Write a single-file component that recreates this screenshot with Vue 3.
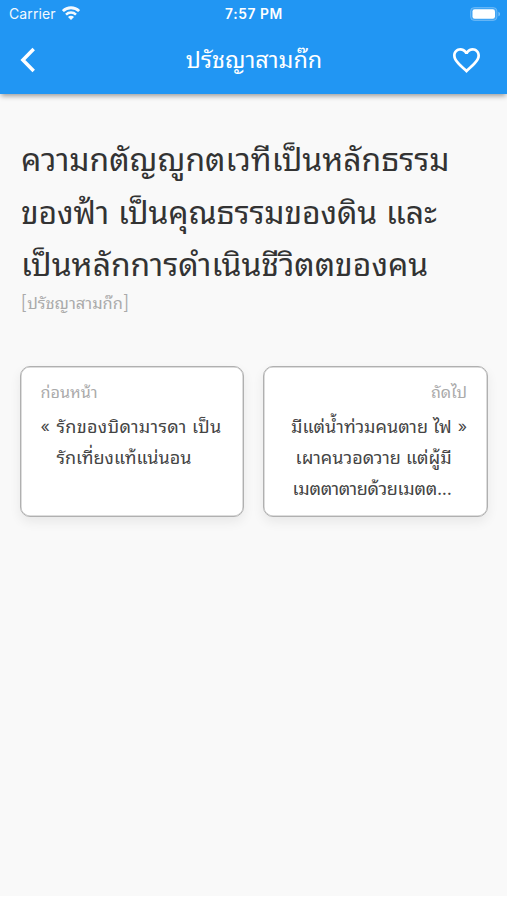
<script setup>
const quoteLines = [
  'ความกตัญญูกตเวทีเป็นหลักธรรม',
  'ของฟ้า เป็นคุณธรรมของดิน และ',
  'เป็นหลักการดำเนินชีวิตตของคน',
]
const previousLines = ['รักของบิดามารดา เป็น', 'รักเที่ยงแท้แน่นอน']
const nextLines = ['มีแต่น้ำท่วมคนตาย ไฟ', 'เผาคนวอดวาย แต่ผู้มี', 'เมตตาตายด้วยเมตต...']
</script>

<template>
  <div class="screen">
    <header class="bar">
      <div class="status">
        <div class="carrier">
          <span>Carrier</span>
          <svg class="wifi" viewBox="0 0 18 14" fill="none" stroke="#fff" stroke-width="2.8">
            <path d="M.9 5.1a11.5 11.5 0 0 1 16.2 0" />
            <path d="M4 8.6a7.1 7.1 0 0 1 10 0" stroke-width="2.5" />
            <path d="M9 14 6 11a4.1 4.1 0 0 1 6 0z" fill="#fff" stroke="none" />
          </svg>
        </div>
        <div class="clock">7:57 PM</div>
        <svg class="battery" viewBox="0 0 31 14">
          <rect x=".5" y=".5" width="26.5" height="13" rx="3.8" fill="#fff" fill-opacity=".15" stroke="#fff" stroke-opacity=".25" />
          <rect x="2.5" y="2.3" width="22.5" height="9.4" rx="2.2" fill="#fff" />
          <path d="M28.4 4.7c2.2.8 2.2 3.8 0 4.6z" fill="#fff" fill-opacity=".4" />
        </svg>
      </div>
      <div class="toolbar">
        <svg class="back" viewBox="0 0 16 26" fill="none" stroke="#fff" stroke-width="3.5">
          <path d="M13.7 2 2.9 13l10.8 11" />
        </svg>
        <h1 class="title">ปรัชญาสามก๊ก</h1>
        <svg class="heart" viewBox="2 3 20 18.35">
          <path fill="#fff" d="M16.5 3c-1.74 0-3.41.81-4.5 2.09C10.91 3.81 9.24 3 7.5 3 4.42 3 2 5.42 2 8.5c0 3.78 3.4 6.86 8.55 11.54L12 21.35l1.45-1.32C18.6 15.36 22 12.28 22 8.5 22 5.42 19.58 3 16.5 3zm-4.4 15.55-.1.1-.1-.1C7.14 14.24 4 11.39 4 8.5 4 6.5 5.5 5 7.5 5c1.54 0 3.04.99 3.57 2.36h1.87C13.46 5.99 14.96 5 16.5 5c2 0 3.5 1.5 3.5 3.5 0 2.89-3.14 5.74-7.9 10.05z" />
        </svg>
      </div>
    </header>
    <main class="content">
      <div class="quote">
        <div v-for="line in quoteLines" :key="line" class="line">{{ line }}</div>
      </div>
      <div class="source"><span class="bracket">[</span>ปรัชญาสามก๊ก<span class="bracket">]</span></div>
      <div class="cards">
        <section class="card previous">
          <div class="label">ก่อนหน้า</div>
          <div class="excerpt">
            <span class="mark">«</span>
            <div><div v-for="line in previousLines" :key="line" class="line">{{ line }}</div></div>
          </div>
        </section>
        <section class="card next">
          <div class="label">ถัดไป</div>
          <div class="excerpt">
            <div><div v-for="line in nextLines" :key="line" class="line">{{ line }}</div></div>
            <span class="mark">»</span>
          </div>
        </section>
      </div>
    </main>
  </div>
</template>

<style>
body { background: #fff; }
</style>

<style scoped>
.screen {
  height: 896px;
  background: #f9f9f9;
  font-family: Inter, Thonburi, "Noto Sans Thai Looped", "Noto Looped Thai", Loma, Garuda, Umpush, Waree, "Noto Sans Thai", "Noto Sans", sans-serif;
  white-space: nowrap;
  overflow: hidden;
}
.bar {
  height: 94px;
  background: #2196f3;
  color: #fff;
  box-shadow: 0 3px 5px -1px rgba(0, 0, 0, .38);
}
.status {
  display: grid;
  grid-template-columns: 1fr auto 1fr;
  align-items: center;
  height: 27px;
  padding: 0 6px 0 9px;
}
.carrier { display: flex; align-items: center; gap: 6px; font-size: 14px; letter-spacing: .1px; opacity: .95; }
.wifi { width: 18px; height: 14px; margin-top: -2px; }
.clock { margin-left: -2px; font-size: 13.8px; font-weight: 600; letter-spacing: .6px; }
.battery { width: 31px; height: 14px; justify-self: end; }
.toolbar {
  display: grid;
  grid-template-columns: 1fr auto 1fr;
  align-items: center;
  height: 66px;
  padding: 0 20px;
}
.back { width: 16px; height: 26px; }
.title { margin: -6px 0 0 1px; font-size: 23.4px; font-weight: 400; }
.heart { width: 27px; height: 25px; justify-self: end; margin-right: 7px; }
.content { padding: 40px 19.5px 0 21px; }
.quote { color: #333; font-size: 31.9px; line-height: 52.5px; }
.quote .line:nth-child(2) { letter-spacing: -.1px; }
.source { display: flex; height: 28px; margin: -1px 0 0 -.5px; color: #aaa; font-size: 16.4px; line-height: 24px; }
.bracket { font-size: 19px; font-weight: 300; }
.cards {
  display: grid;
  grid-template-columns: repeat(2, minmax(0, 1fr));
  gap: 19px;
  margin: 47px 0 0 -1px;
}
.card {
  box-sizing: border-box;
  height: 151px;
  padding: 13px 19.5px;
  border: 1px solid #b0b0b0;
  border-radius: 10px;
  background: #fff;
  box-shadow: inset 0 0 0 .5px #bbb, 0 5px 12px rgba(0, 0, 0, .07);
}
.label { color: #aaa; font-size: 16.2px; line-height: 24px; }
.excerpt { display: flex; gap: 6px; margin-top: 7px; color: #444; font-size: 18px; line-height: 31px; }
.mark { font-size: 16px; }
.previous .mark { margin-right: .6px; }
.previous .line:first-child { letter-spacing: .33px; }
.next { text-align: right; }
.next .excerpt { justify-content: flex-end; }
.next .line:last-child { letter-spacing: -.28px; }
</style>
